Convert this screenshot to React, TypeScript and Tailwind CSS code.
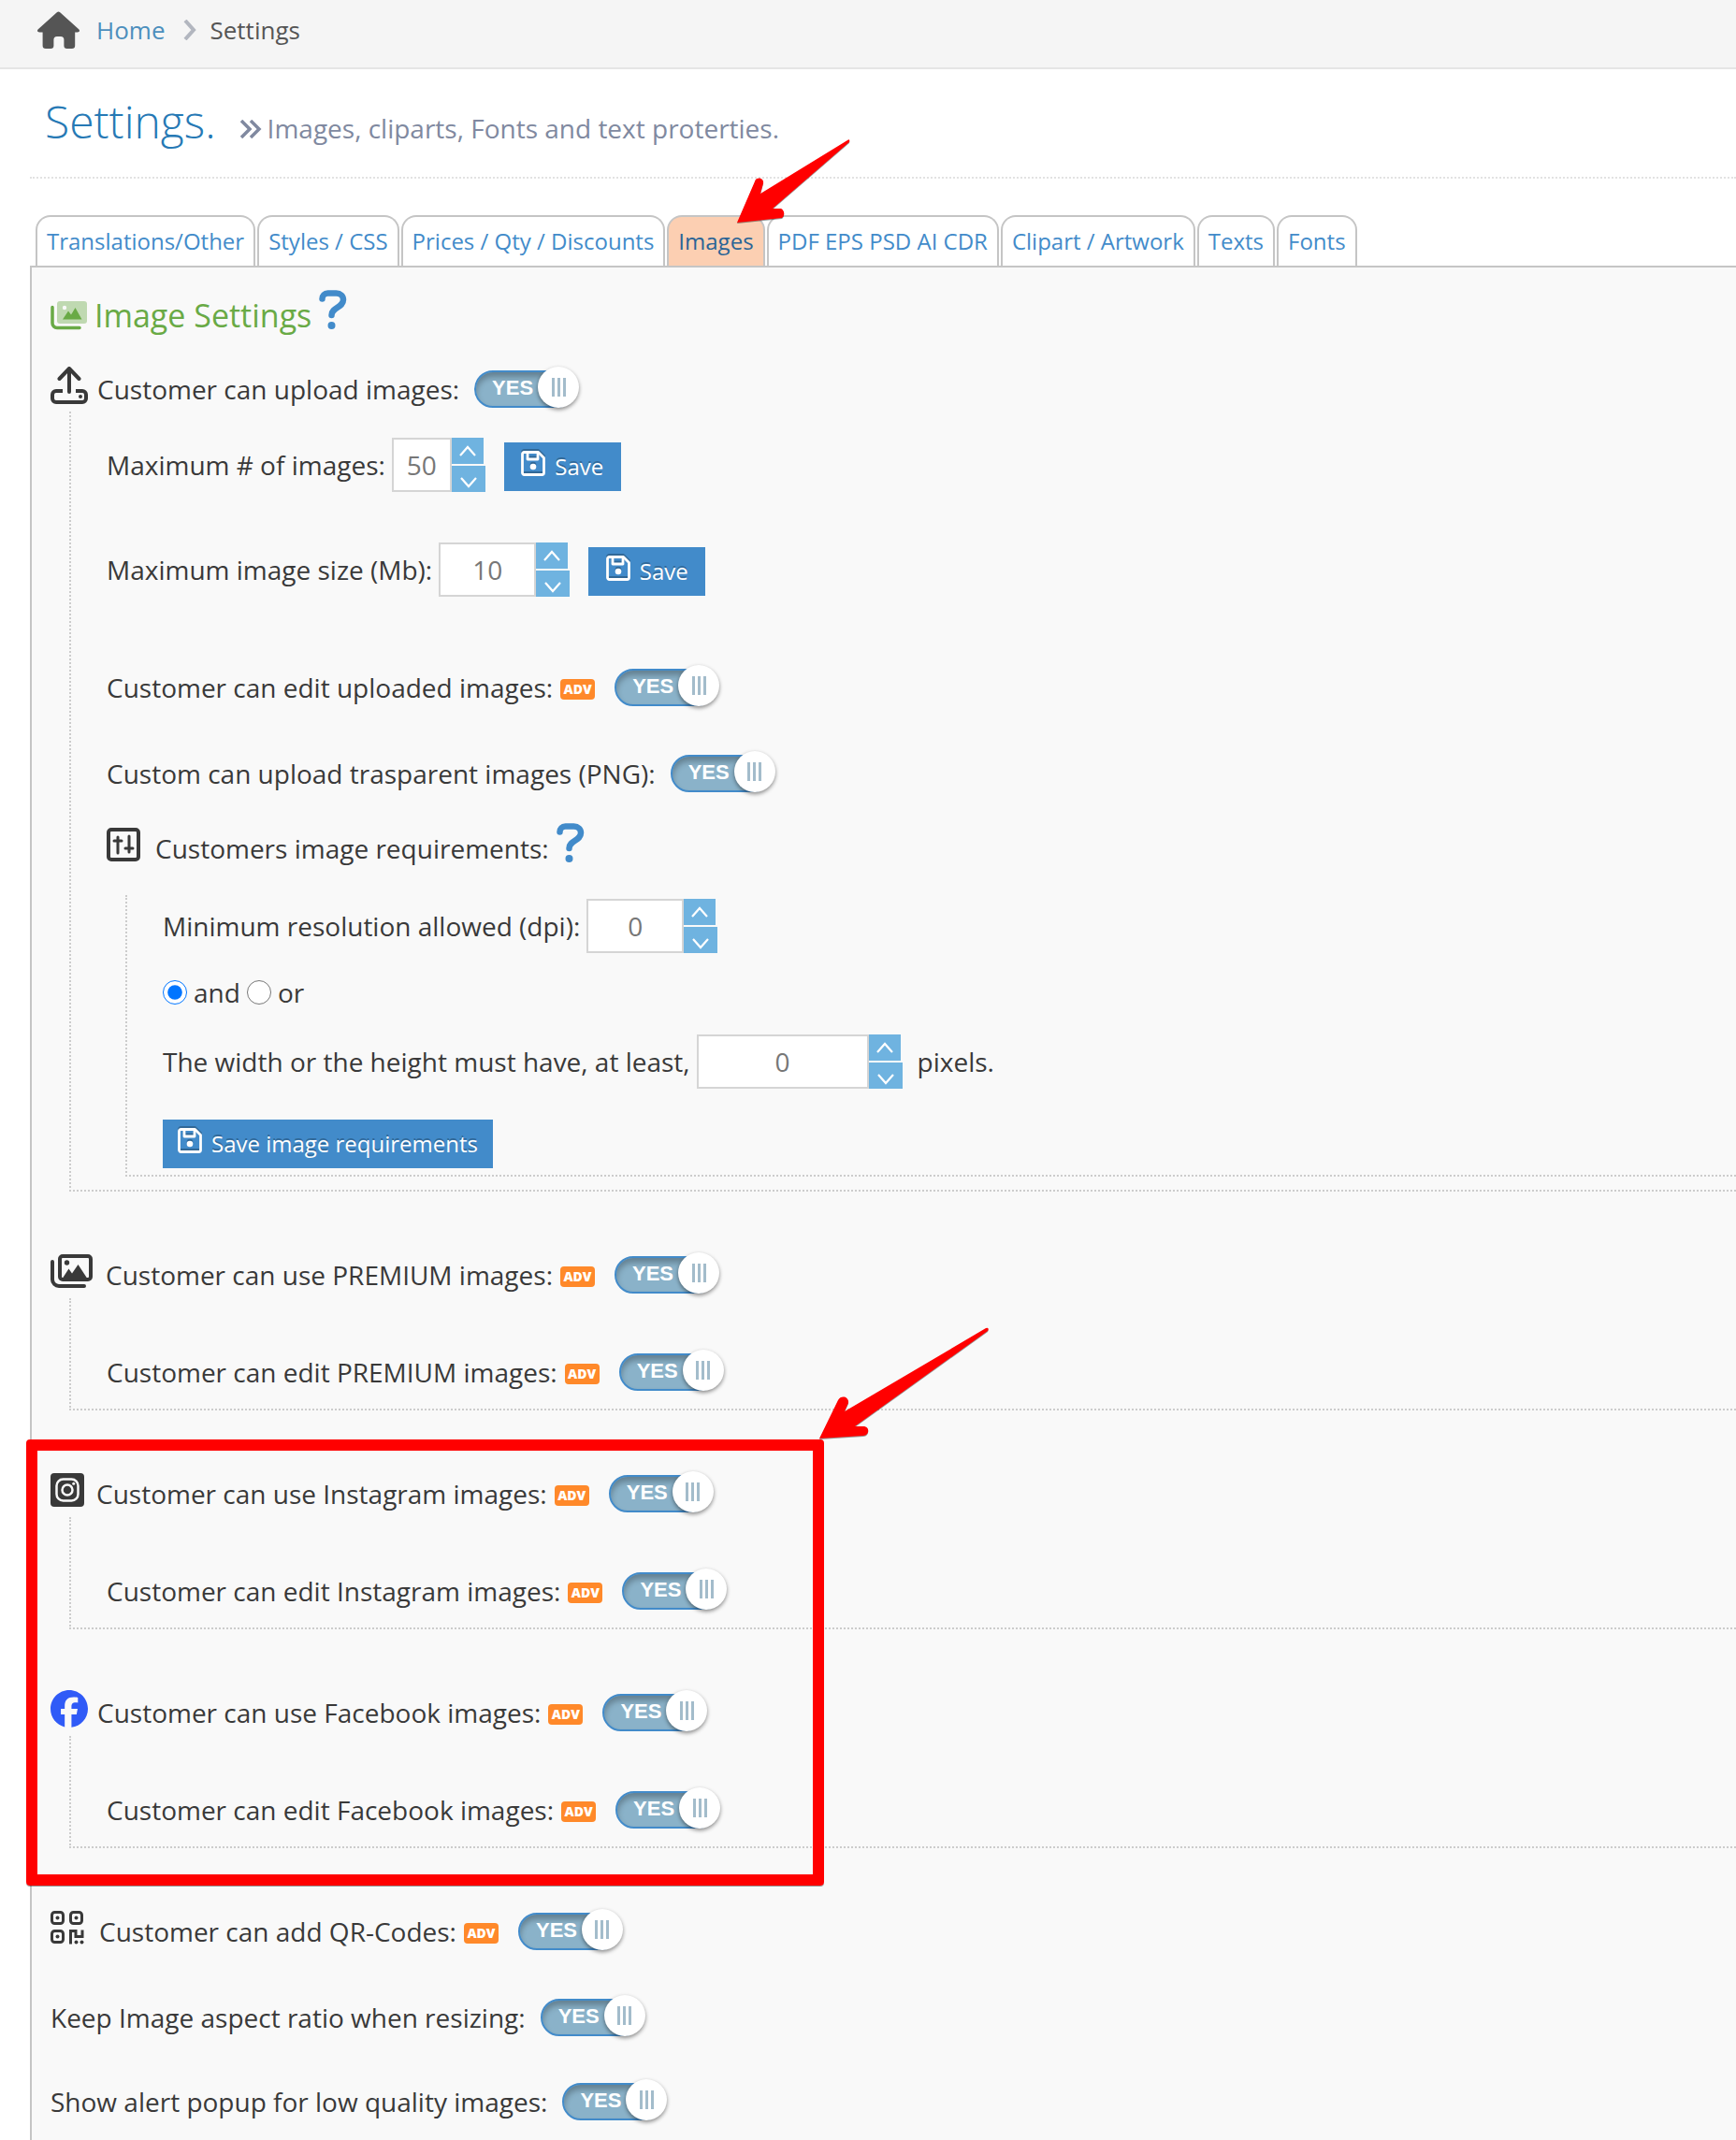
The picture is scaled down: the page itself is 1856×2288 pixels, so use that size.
import { ReactNode, useId, useState } from 'react';
import { FaFacebook } from 'react-icons/fa6';

const tabs = [
  'Translations/Other',
  'Styles / CSS',
  'Prices / Qty / Discounts',
  'Images',
  'PDF EPS PSD AI CDR',
  'Clipart / Artwork',
  'Texts',
  'Fonts',
];

function HomeIcon() {
  return (
    <svg viewBox="0 0 45 40" className="w-[45px] h-10 shrink-0 text-[#555]" fill="currentColor" aria-hidden="true">
      <path d="M20.8 1.2a2.6 2.6 0 0 1 3.4 0l20 18c1.6 1.5.6 3.3-1.4 3.3h-2.6v14a3.4 3.4 0 0 1-3.4 3.5h-5.2a3.2 3.2 0 0 1-3.2-3.2v-6.3a3.5 3.5 0 0 0-3.5-3.5h-4a3.5 3.5 0 0 0-3.5 3.5v6.3a3.2 3.2 0 0 1-3.2 3.2H9a3.4 3.4 0 0 1-3.4-3.5v-14H2.2c-2 0-3-1.8-1.4-3.3z" />
    </svg>
  );
}

function ImagesIcon() {
  return (
    <svg viewBox="0 0 45 36" className="w-[45px] h-9 mb-2 shrink-0" fill="none" stroke="currentColor" strokeWidth="4" strokeLinecap="round" aria-hidden="true">
      <rect x="10" y="2" width="33" height="25" rx="3" />
      <path d="M2 8v19a7 7 0 0 0 7 7h27" />
      <circle cx="17.5" cy="9" r="2.7" fill="currentColor" stroke="none" />
      <path d="M12 27l7.5-11.5 3.5 5L29.5 11 40 27z" fill="currentColor" stroke="none" />
    </svg>
  );
}

function ImagesDuoIcon() {
  return (
    <svg viewBox="0 0 39 31" className="w-[39px] h-[31px] shrink-0 text-[#69aa46]" fill="none" aria-hidden="true">
      <rect x="7" y="0" width="32" height="24" rx="3" fill="currentColor" opacity="0.4" />
      <circle cx="15" cy="7" r="2.2" fill="#f9f9f9" />
      <path d="M13 19.5l6-9 3 4 4.5-7.5 7 12.5z" fill="currentColor" />
      <path d="M2 6.5v17a5 5 0 0 0 5 5h24" stroke="currentColor" strokeWidth="3.5" strokeLinecap="round" />
    </svg>
  );
}

function UploadIcon() {
  return (
    <svg viewBox="0 0 40 40" className="size-10 mb-2 shrink-0" fill="none" stroke="currentColor" strokeWidth="4" strokeLinecap="round" strokeLinejoin="round" aria-hidden="true">
      <path d="M20 27V3M9.5 13L20 2l10.5 11" />
      <path d="M13 26H6a4 4 0 0 0-4 4v4a4 4 0 0 0 4 4h28a4 4 0 0 0 4-4v-4a4 4 0 0 0-4-4h-7" strokeLinecap="butt" />
      <circle cx="32" cy="32" r="2" fill="currentColor" stroke="none" />
    </svg>
  );
}

function SlidersIcon() {
  return (
    <svg viewBox="0 0 36 36" className="size-9 mb-2 shrink-0" fill="none" stroke="currentColor" strokeWidth="3" strokeLinecap="round" aria-hidden="true">
      <rect x="2" y="2" width="32" height="32" rx="3" strokeWidth="4" />
      <path d="M12 10v17M24 9v17M8 14h8M20 22h8" />
    </svg>
  );
}

function InstagramIcon() {
  return (
    <svg viewBox="0 0 36 36" className="size-9 mb-2 shrink-0" fill="none" stroke="#f9f9f9" strokeWidth="2.5" aria-hidden="true">
      <rect width="36" height="36" rx="4" fill="currentColor" stroke="none" />
      <rect x="6.5" y="6.5" width="23" height="23" rx="7" />
      <circle cx="18" cy="18" r="5.5" />
      <circle cx="24.7" cy="11.3" r="1.5" fill="#f9f9f9" stroke="none" />
    </svg>
  );
}

function QrIcon() {
  return (
    <svg viewBox="0 0 36 36" className="size-9 mb-2 shrink-0" fill="none" stroke="currentColor" strokeWidth="3" aria-hidden="true">
      <rect x="1.5" y="1.5" width="12" height="12" rx="3" />
      <rect x="21.5" y="1.5" width="12" height="12" rx="3" />
      <rect x="1.5" y="21.5" width="12" height="12" rx="3" />
      <path d="M21.5 35.5v-14H27v6h7v-7" />
      <g fill="currentColor" stroke="none">
        <circle cx="7.5" cy="7.5" r="2" />
        <circle cx="27.5" cy="7.5" r="2" />
        <circle cx="7.5" cy="27.5" r="2" />
        <circle cx="27.5" cy="33.5" r="2" />
        <circle cx="33.5" cy="33.5" r="2" />
      </g>
    </svg>
  );
}

function SaveIcon() {
  return (
    <svg viewBox="0 0 26 27" className="w-[26px] h-[27px] mb-2 shrink-0 drop-shadow-[0_-2px_0_rgba(0,0,0,0.25)]" fill="none" stroke="currentColor" strokeWidth="2.8" strokeLinejoin="round" aria-hidden="true">
      <path d="M3.5 1.5h15l6 6v16a2 2 0 0 1-2 2h-19a2 2 0 0 1-2-2v-20a2 2 0 0 1 2-2z" />
      <path d="M7 2v7h11V2" />
      <circle cx="13" cy="17" r="3.3" fill="currentColor" stroke="none" />
    </svg>
  );
}

// points down-left, tip sits in the bottom left corner of the box
function Arrow({ steep = false, className }: { steep?: boolean; className: string }) {
  return steep ? (
    <svg viewBox="0 0 122 92" className={`absolute z-10 w-[122px] h-[92px] pointer-events-none drop-shadow-[0_1px_0_rgba(0,0,0,0.4)] ${className}`} fill="#f00" aria-hidden="true">
      <path d="M0 90L19 46a4.5 4.5 0 0 1 9 2L25 59 118 2q3-2 2 2L38 75h9a6 6 0 0 1 1 10z" />
    </svg>
  ) : (
    <svg viewBox="0 0 182 120" className={`absolute z-10 w-[182px] h-[120px] pointer-events-none drop-shadow-[0_1px_0_rgba(0,0,0,0.4)] ${className}`} fill="#f00" aria-hidden="true">
      <path d="M0 119L20 78c3-6 12-4 11 3l-4 9L178 1q4-1 2 3L38 106h9c7 0 7 9 0 10z" />
    </svg>
  );
}

function Toggle({ id }: { id: string }) {
  const [on, setOn] = useState(true);
  return (
    <label htmlFor={id} className="relative flex h-11 w-28 shrink-0 items-center cursor-pointer">
      <input id={id} type="checkbox" className="sr-only" checked={on} onChange={() => setOn(!on)} />
      <span className="flex h-10 w-[108px] items-center rounded-full border-2 border-[#428bca] bg-[#8ab2c9] pl-[17px] pb-[2px] font-['Liberation_Sans',sans-serif] text-[22px] font-bold leading-6 text-white shadow-[inset_0_5px_6px_rgba(0,0,0,0.28)]">
        {on ? 'YES' : 'NO'}
      </span>
      <span className="absolute right-0 -top-[2px] flex size-11 items-center justify-center gap-[3px] rounded-full bg-white shadow-[0_2px_4px_rgba(0,0,0,0.45)]">
        <i className="h-5 w-[3px] bg-[#a3bccb]" />
        <i className="h-5 w-[3px] bg-[#a3bccb]" />
        <i className="h-5 w-[3px] bg-[#a3bccb]" />
      </span>
    </label>
  );
}

function Adv() {
  return (
    <span className="ml-2 mt-1 mr-[5px] flex h-[22px] w-[37px] shrink-0 items-center justify-center rounded bg-[#ff892a] text-[14px] font-extrabold leading-none text-white">
      ADV
    </span>
  );
}

type SwitchRowProps = { label: string; adv?: boolean; icon?: ReactNode; className?: string };

function SwitchRow({ label, adv, icon, className = '' }: SwitchRowProps) {
  const id = useId();
  return (
    <div className={`flex h-11 items-center whitespace-nowrap ${className}`}>
      {icon}
      <label htmlFor={id}>{label}</label>
      {adv && <Adv />}
      <span className="ml-4">
        <Toggle id={id} />
      </span>
    </div>
  );
}

function Spinner({ label, initial, width }: { label: string; initial: number; width: string }) {
  const id = useId();
  const [value, setValue] = useState(initial);
  return (
    <>
      <label htmlFor={id}>{label}</label>
      <div className="ml-[7px] flex h-[58px]">
        <input
          id={id}
          type="text"
          value={value}
          onChange={(e) => setValue(Number(e.target.value) || 0)}
          className={`h-full border-2 border-[#d5d5d5] bg-white text-center text-[28px] text-[#777] outline-none ${width}`}
        />
        <div className="flex w-9 flex-col items-start gap-[2px]">
          <button type="button" aria-label="Increase" onClick={() => setValue(value + 1)} className="flex h-7 w-[34px] items-center justify-center bg-[#6fb3e0] text-white">
            <svg viewBox="0 0 18 12" className="w-[18px] h-3" fill="none" stroke="currentColor" strokeWidth="2.2" aria-hidden="true">
              <path d="M1 11l8-9 8 9" />
            </svg>
          </button>
          <button type="button" aria-label="Decrease" onClick={() => setValue(Math.max(0, value - 1))} className="flex h-7 w-9 items-center justify-center bg-[#6fb3e0] pt-2 text-white">
            <svg viewBox="0 0 18 12" className="w-[18px] h-3" fill="none" stroke="currentColor" strokeWidth="2.2" aria-hidden="true">
              <path d="M1 1l8 9 8-9" />
            </svg>
          </button>
        </div>
      </div>
    </>
  );
}

function SaveButton({ children, className = '' }: { children: ReactNode; className?: string }) {
  return (
    <button type="button" className={`flex h-[52px] min-w-[125px] items-center justify-center gap-[10px] bg-[#428bca] px-4 text-[24px] text-white [text-shadow:0_-2px_0_rgba(0,0,0,0.25)] ${className}`}>
      <SaveIcon />
      {children}
    </button>
  );
}

function Help() {
  return (
    <a href="#help" aria-label="Help" className="ml-2 mb-3 text-[#428bca]">
      <svg viewBox="0 0 30 42" className="h-[42px] w-[30px]" fill="none" stroke="currentColor" strokeWidth="6.5" strokeLinecap="round" aria-hidden="true">
        <path d="M3.5 9.5C3.5 6 6 3.5 9.5 3.5h9C23 3.5 26 6.5 26 10.5c0 8.5-12.5 8-12.5 16.5" />
        <circle cx="13.5" cy="38" r="4" fill="currentColor" stroke="none" />
      </svg>
    </a>
  );
}

// dotted branch hanging under a parent option
function Branch({ children, className }: { children: ReactNode; className: string }) {
  return <div className={`ml-5 border-b-2 border-l-2 border-dotted border-[#ccc] pl-[38px] ${className}`}>{children}</div>;
}

export default function App() {
  return (
    <div className="flex min-h-screen flex-col overflow-x-hidden bg-white font-['Open_Sans',sans-serif] text-[28px] leading-10 text-[#393939]">
      <nav aria-label="Breadcrumb" className="flex h-[74px] items-center border-b-2 border-[#e5e5e5] bg-[#f5f5f5] pl-10 pb-2 text-[26px]">
        <HomeIcon />
        <a href="#home" className="ml-[18px] text-[#4c8fbd]">Home</a>
        <svg viewBox="0 0 14 22" className="ml-5 mr-[14px] w-[14px] h-[22px]" fill="none" stroke="#b2b6bf" strokeWidth="4" aria-hidden="true">
          <path d="M2 1l9 10-9 10" />
        </svg>
        <span className="text-[#555]">Settings</span>
      </nav>

      <main className="flex flex-1 flex-col pl-8">
        <header className="flex h-[117px] items-baseline border-b-2 border-dotted border-[#e2e2e2] pl-4 pt-6">
          <h1 className="text-[48px] font-light leading-[64px] text-[#2679b5]">Settings.</h1>
          <p className="ml-[25px] flex items-baseline gap-[6px] text-[#8089a0]">
            <svg viewBox="0 0 24 20" className="h-5 w-6" fill="none" stroke="currentColor" strokeWidth="3.5" aria-hidden="true">
              <path d="M2 1l9 9-9 9M12 1l9 9-9 9" />
            </svg>
            Images, cliparts, Fonts and text proterties.
          </p>
        </header>

        <div role="tablist" className="mt-[39px] flex gap-[2px] pl-[6px]">
          {tabs.map((tab) => (
            <div key={tab} className="relative flex">
              <button
                type="button"
                role="tab"
                aria-selected={tab === 'Images'}
                className={`h-[54px] whitespace-nowrap rounded-t-2xl border-2 border-b-0 border-[#c5c5c5] px-[10px] text-[24px] ${
                  tab === 'Images' ? 'bg-[#fccfb2] text-[#2a6496]' : 'bg-white text-[#428bca]'
                }`}
              >
                {tab}
              </button>
              {tab === 'Images' && <Arrow steep className="bottom-11 left-[75px]" />}
            </div>
          ))}
        </div>

        <section className="flex-1 border-l-2 border-t-2 border-[#c5c5c5] bg-[#f9f9f9] pl-5 pt-[29px] pb-4">
          <div className="flex h-11 items-center">
            <ImagesDuoIcon />
            <h2 className="ml-2 text-[34px] text-[#69aa46]">Image Settings</h2>
            <Help />
          </div>

          <SwitchRow className="mt-[35px]" icon={<span className="mr-[10px]"><UploadIcon /></span>} label="Customer can upload images:" />

          <Branch className="mt-[2px] pt-7 pb-[14px]">
            <div className="flex h-[58px] items-center whitespace-nowrap">
              <Spinner label="Maximum # of images:" initial={50} width="w-16" />
              <SaveButton className="ml-5 mt-1">Save</SaveButton>
            </div>
            <div className="mt-[54px] flex h-[58px] items-center whitespace-nowrap">
              <Spinner label="Maximum image size (Mb):" initial={10} width="w-[104px]" />
              <SaveButton className="ml-5 mt-1">Save</SaveButton>
            </div>
            <SwitchRow className="mt-[75px]" label="Customer can edit uploaded images:" adv />
            <SwitchRow className="mt-12" label="Custom can upload trasparent images (PNG):" />
            <div className="mt-9 flex h-11 items-center whitespace-nowrap">
              <SlidersIcon />
              <span className="ml-4">Customers image requirements:</span>
              <Help />
            </div>

            <Branch className="mt-7 pt-1 pb-[7px]">
              <div className="flex h-[58px] items-center whitespace-nowrap">
                <Spinner label="Minimum resolution allowed (dpi):" initial={0} width="w-[104px]" />
              </div>
              <div className="mt-5 flex h-11 items-center gap-[7px]">
                <label className="flex items-center gap-[7px]">
                  <input type="radio" name="match" defaultChecked className="size-[26px] accent-[#0075ff]" />
                  and
                </label>
                <label className="flex items-center gap-[7px]">
                  <input type="radio" name="match" className="size-[26px] accent-[#0075ff]" />
                  or
                </label>
              </div>
              <div className="mt-[23px] flex h-[58px] items-center whitespace-nowrap">
                <Spinner label="The width or the height must have, at least," initial={0} width="w-[184px]" />
                <span className="ml-4">pixels.</span>
              </div>
              <SaveButton className="mt-[33px]">Save image requirements</SaveButton>
            </Branch>
          </Branch>

          <SwitchRow className="mt-[67px]" icon={<span className="mr-[14px]"><ImagesIcon /></span>} label="Customer can use PREMIUM images:" adv />
          <Branch className="mt-[3px] pt-[57px] pb-[17px]">
            <SwitchRow label="Customer can edit PREMIUM images:" adv />
          </Branch>

          <div className="relative">
            <SwitchRow className="mt-[67px]" icon={<span className="mr-[13px]"><InstagramIcon /></span>} label="Customer can use Instagram images:" adv />
            <Branch className="mt-[3px] pt-[57px] pb-[17px]">
              <SwitchRow label="Customer can edit Instagram images:" adv />
            </Branch>

            <SwitchRow className="mt-[67px]" icon={<span className="mr-[10px]"><FaFacebook className="size-10 mb-2 text-[#305bf7]" /></span>} label="Customer can use Facebook images:" adv />
            <Branch className="mt-[3px] pt-[57px] pb-[17px]">
              <SwitchRow label="Customer can edit Facebook images:" adv />
            </Branch>

            <div className="pointer-events-none absolute -top-9 -bottom-10 -left-[26px] w-[853px] rounded border-[12px] border-[#f00] shadow-[0_1px_0_rgba(0,0,0,0.4)]" />
            <Arrow className="-top-[156px] left-[822px]" />
          </div>

          <SwitchRow className="mt-[67px]" icon={<span className="mr-4"><QrIcon /></span>} label="Customer can add QR-Codes:" adv />
          <SwitchRow className="mt-12" label="Keep Image aspect ratio when resizing:" />
          <SwitchRow className="mt-[46px]" label="Show alert popup for low quality images:" />
        </section>
      </main>
    </div>
  );
}
